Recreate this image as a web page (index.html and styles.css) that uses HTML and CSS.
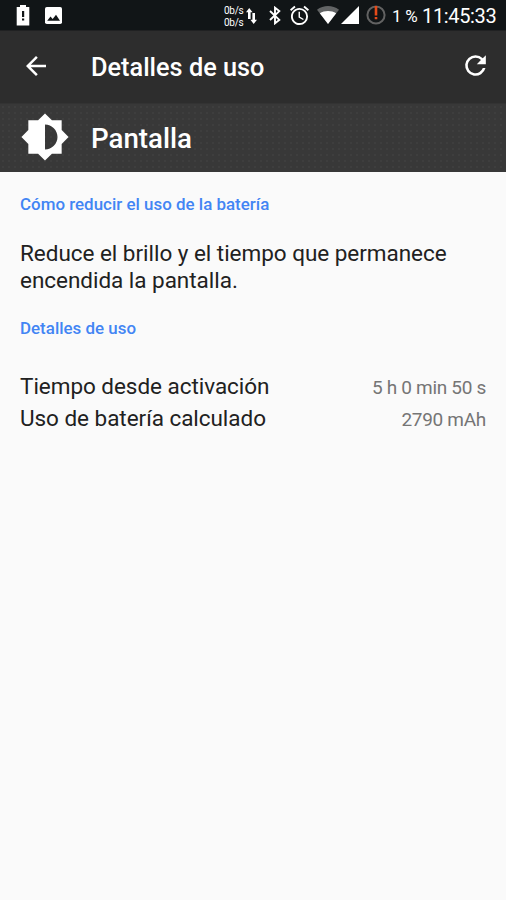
FILE: index.html
```html
<!DOCTYPE html>
<html lang="es">
<head>
<meta charset="utf-8">
<title>Detalles de uso</title>
<link rel="stylesheet" href="styles.css">
</head>
<body>
<div class="status">
  <svg class="s-battery" width="14" height="21" viewBox="0 0 14 21"><path fill="#fff" d="M4 0h6v2h3.300v18.500H.700V2H4z"/><path fill="#111517" d="M6 6h2.200v6H6zM6 13.600h2.200v2H6z"/></svg>
  <svg class="s-image" width="17" height="17" viewBox="0 0 17 17"><rect width="17" height="17" rx="1.8" fill="#fff"/><path fill="#111517" d="M2.200 13.700l3.300-4.200 2.200 2.500 3.300-4.200 4 5.900z"/></svg>
  <div class="s-speed"><span>0b/s</span><span>0b/s</span></div>
  <svg class="s-arrows" width="11" height="16" viewBox="0 0 11 16"><path fill="#fff" d="M3.200 0L0 4.200h2V11h2.600V4.200h2zM7.700 16l-3.300-4.200h2V5H9v6.800h2z"/></svg>
  <svg class="s-bt" width="12" height="19" viewBox="0 0 12 19"><path fill="none" stroke="#fff" stroke-width="1.9" d="M1 5l9.300 8.900L6 17.300V1.700l4.300 3.400L1 14"/></svg>
  <svg class="s-alarm" width="19" height="19" viewBox="2 2 20 20"><path fill="#fff" d="M22 5.720l-4.600-3.860-1.290 1.530 4.600 3.860L22 5.720zM7.880 3.390L6.600 1.860 2 5.710l1.290 1.530 4.590-3.850zM12.500 8H11v6l4.750 2.850.750-1.230-4-2.370V8zM12 4c-4.970 0-9 4.030-9 9s4.020 9 9 9a9 9 0 1 0 0-18zm0 16c-3.870 0-7-3.130-7-7s3.130-7 7-7 7 3.130 7 7-3.130 7-7 7z"/></svg>
  <svg class="s-wifi" width="22" height="18" viewBox="0 0 22 18"><path fill="#626465" d="M0 3.700C6.500-1.200 15.500-1.200 22 3.700L11 18z"/><path fill="#fff" d="M2.800 7.300c4.800-3.200 11.600-3.200 16.400 0L11 18z"/></svg>
  <svg class="s-signal" width="18" height="18" viewBox="0 0 18 18"><path fill="#fff" d="M0 18L18 0v18z"/></svg>
  <svg class="s-ring" width="20" height="20" viewBox="0 0 20 20"><circle cx="10" cy="10" r="8.6" fill="none" stroke="#626262" stroke-width="2"/><path fill="#e64a19" d="M8.700 1h2.600v9.500H8.700zM8.700 12h2.600v2.200H8.700z"/></svg>
  <span class="s-pct">1 %</span>
  <span class="s-time">11:45:33</span>
</div>
<header class="toolbar">
  <svg class="back" width="30" height="30" viewBox="0 0 24 24"><path fill="#fff" d="M20 11H7.830l5.590-5.590L12 4l-8 8 8 8 1.410-1.410L7.830 13H20v-2z"/></svg>
  <h1 class="title">Detalles de uso</h1>
  <svg class="refresh" width="31" height="31" viewBox="0 0 24 24"><path fill="#fff" d="M17.650 6.350A7.960 7.960 0 0 0 12 4a8 8 0 1 0 7.730 10h-2.080A6 6 0 1 1 12 6c1.660 0 3.140.690 4.220 1.780L13 11h7V4l-2.350 2.350z"/></svg>
</header>
<section class="entry">
  <svg class="bright" width="50" height="50" viewBox="0 0 24 24"><path fill="#fff" d="M20 15.310L23.310 12 20 8.690V4h-4.690L12 .690 8.690 4H4v4.690L.690 12 4 15.310V20h4.690L12 23.310 15.310 20H20v-4.690zM12 18V6c3.310 0 6 2.690 6 6s-2.690 6-6 6z"/></svg>
  <h2 class="name">Pantalla</h2>
</section>
<main class="content">
  <h3 class="label l1">Cómo reducir el uso de la batería</h3>
  <p class="tip">Reduce el brillo y el tiempo que permanece<br>encendida la pantalla.</p>
  <h3 class="label l2">Detalles de uso</h3>
  <div class="row"><span class="key">Tiempo desde activación</span><span class="value">5 h 0 min 50 s</span></div>
  <div class="row"><span class="key">Uso de batería calculado</span><span class="value">2790 mAh</span></div>
</main>
</body>
</html>
```
FILE: styles.css
```css
* { box-sizing: border-box; }
body { margin: 0; height: 900px; background: #fafafa; color: #212121; font-family: Roboto, "Liberation Sans", sans-serif; overflow: hidden; }
h1, h2, h3, p { margin: 0; font-weight: 500; }
svg { display: block; flex: none; }
.status { height: 31px; display: flex; align-items: flex-start; background: #111517; color: #fff; white-space: nowrap; border-bottom: 1px solid #202122; }
.s-battery { margin: 5px 0 0 16px; }
.s-image { margin: 7px 0 0 15px; }
.s-speed { margin: 5px 0 0 162px; width: 19px; display: flex; flex-direction: column; font: 10px/11.5px Roboto, sans-serif; letter-spacing: -0.3px; }
.s-arrows { margin: 8px 0 0 3px; }
.s-bt { margin: 6px 0 0 12px; }
.s-alarm { margin: 6px 0 0 9px; overflow: visible; }
.s-wifi { margin: 6px 0 0 8px; }
.s-signal { margin: 6px 0 0 2px; }
.s-ring { margin: 5px 0 0 7px; }
.s-pct { width: 30px; margin-left: 6px; font-size: 17px; letter-spacing: -0.2px; line-height: 33px; }
.s-time { font-size: 20px; letter-spacing: -0.35px; line-height: 32px; }
.toolbar { height: 73px; display: flex; align-items: center; background: #2d2d2d; color: #fff; border-bottom: 1px solid #333; }
.back { margin: -2px 0 0 21px; }
.title { margin: 2px 0 0 40px; font-size: 25.3px; line-height: 30px; flex: 1; }
.refresh { margin: -3px 15px 0 0; }
.entry { height: 68px; display: flex; align-items: center; background: radial-gradient(circle, #454545 0.6px, transparent 0.8px) 0 0 / 6px 6px #383838; color: #fff; }
.bright { margin: -3px 0 0 20px; }
.name { margin: 1px 0 0 21px; font-size: 27.7px; line-height: 32px; }
.content { padding: 0 20px; }
.label { color: #4285f4; font-size: 16.9px; letter-spacing: 0.02px; line-height: 20px; }
.l1 { padding-top: 22px; }
.tip { margin-top: 26px; font-size: 22.5px; letter-spacing: -0.03px; line-height: 27px; font-weight: 400; white-space: nowrap; }
.l2 { margin: 24px 0 32px; }
.row { height: 32px; display: flex; justify-content: space-between; align-items: baseline; line-height: 32px; }
.key { font-size: 22.5px; letter-spacing: -0.04px; }
.value { font-size: 19px; letter-spacing: -0.3px; color: #757575; }
```
